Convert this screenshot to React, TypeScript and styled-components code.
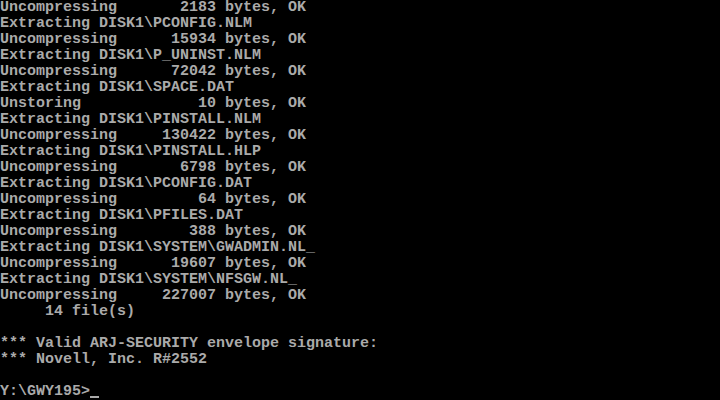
import React from "react";
import styled, { createGlobalStyle } from "styled-components";

const lines: string[] = [
  "Uncompressing       2183 bytes, OK",
  "Extracting DISK1\\PCONFIG.NLM",
  "Uncompressing      15934 bytes, OK",
  "Extracting DISK1\\P_UNINST.NLM",
  "Uncompressing      72042 bytes, OK",
  "Extracting DISK1\\SPACE.DAT",
  "Unstoring             10 bytes, OK",
  "Extracting DISK1\\PINSTALL.NLM",
  "Uncompressing     130422 bytes, OK",
  "Extracting DISK1\\PINSTALL.HLP",
  "Uncompressing       6798 bytes, OK",
  "Extracting DISK1\\PCONFIG.DAT",
  "Uncompressing         64 bytes, OK",
  "Extracting DISK1\\PFILES.DAT",
  "Uncompressing        388 bytes, OK",
  "Extracting DISK1\\SYSTEM\\GWADMIN.NL_",
  "Uncompressing      19607 bytes, OK",
  "Extracting DISK1\\SYSTEM\\NFSGW.NL_",
  "Uncompressing     227007 bytes, OK",
  "     14 file(s)",
  "",
  "*** Valid ARJ-SECURITY envelope signature:",
  "*** Novell, Inc. R#2552",
  "",
];

const prompt = "Y:\\GWY195>";

const GlobalStyle = createGlobalStyle`
  html, body {
    margin: 0;
    padding: 0;
    background: #000;
  }
`;

const Screen = styled.div`
  width: 720px;
  height: 400px;
  overflow: hidden;
  background: #000;
  color: #aaaaaa;
  font-family: "Liberation Mono", "DejaVu Sans Mono", monospace;
  font-size: 15px;
  font-weight: bold;
  line-height: 16px;
`;

const Line = styled.div`
  height: 16px;
  white-space: pre;
`;

const Cursor = styled.span`
  display: inline-block;
  width: 9px;
  height: 2px;
  background: #aaaaaa;
  vertical-align: -3px;
`;

export default function App() {
  return (
    <>
      <GlobalStyle />
      <Screen>
        {lines.map((text, i) => (
          <Line key={i}>{text}</Line>
        ))}
        <Line>
          {prompt}
          <Cursor />
        </Line>
      </Screen>
    </>
  );
}
